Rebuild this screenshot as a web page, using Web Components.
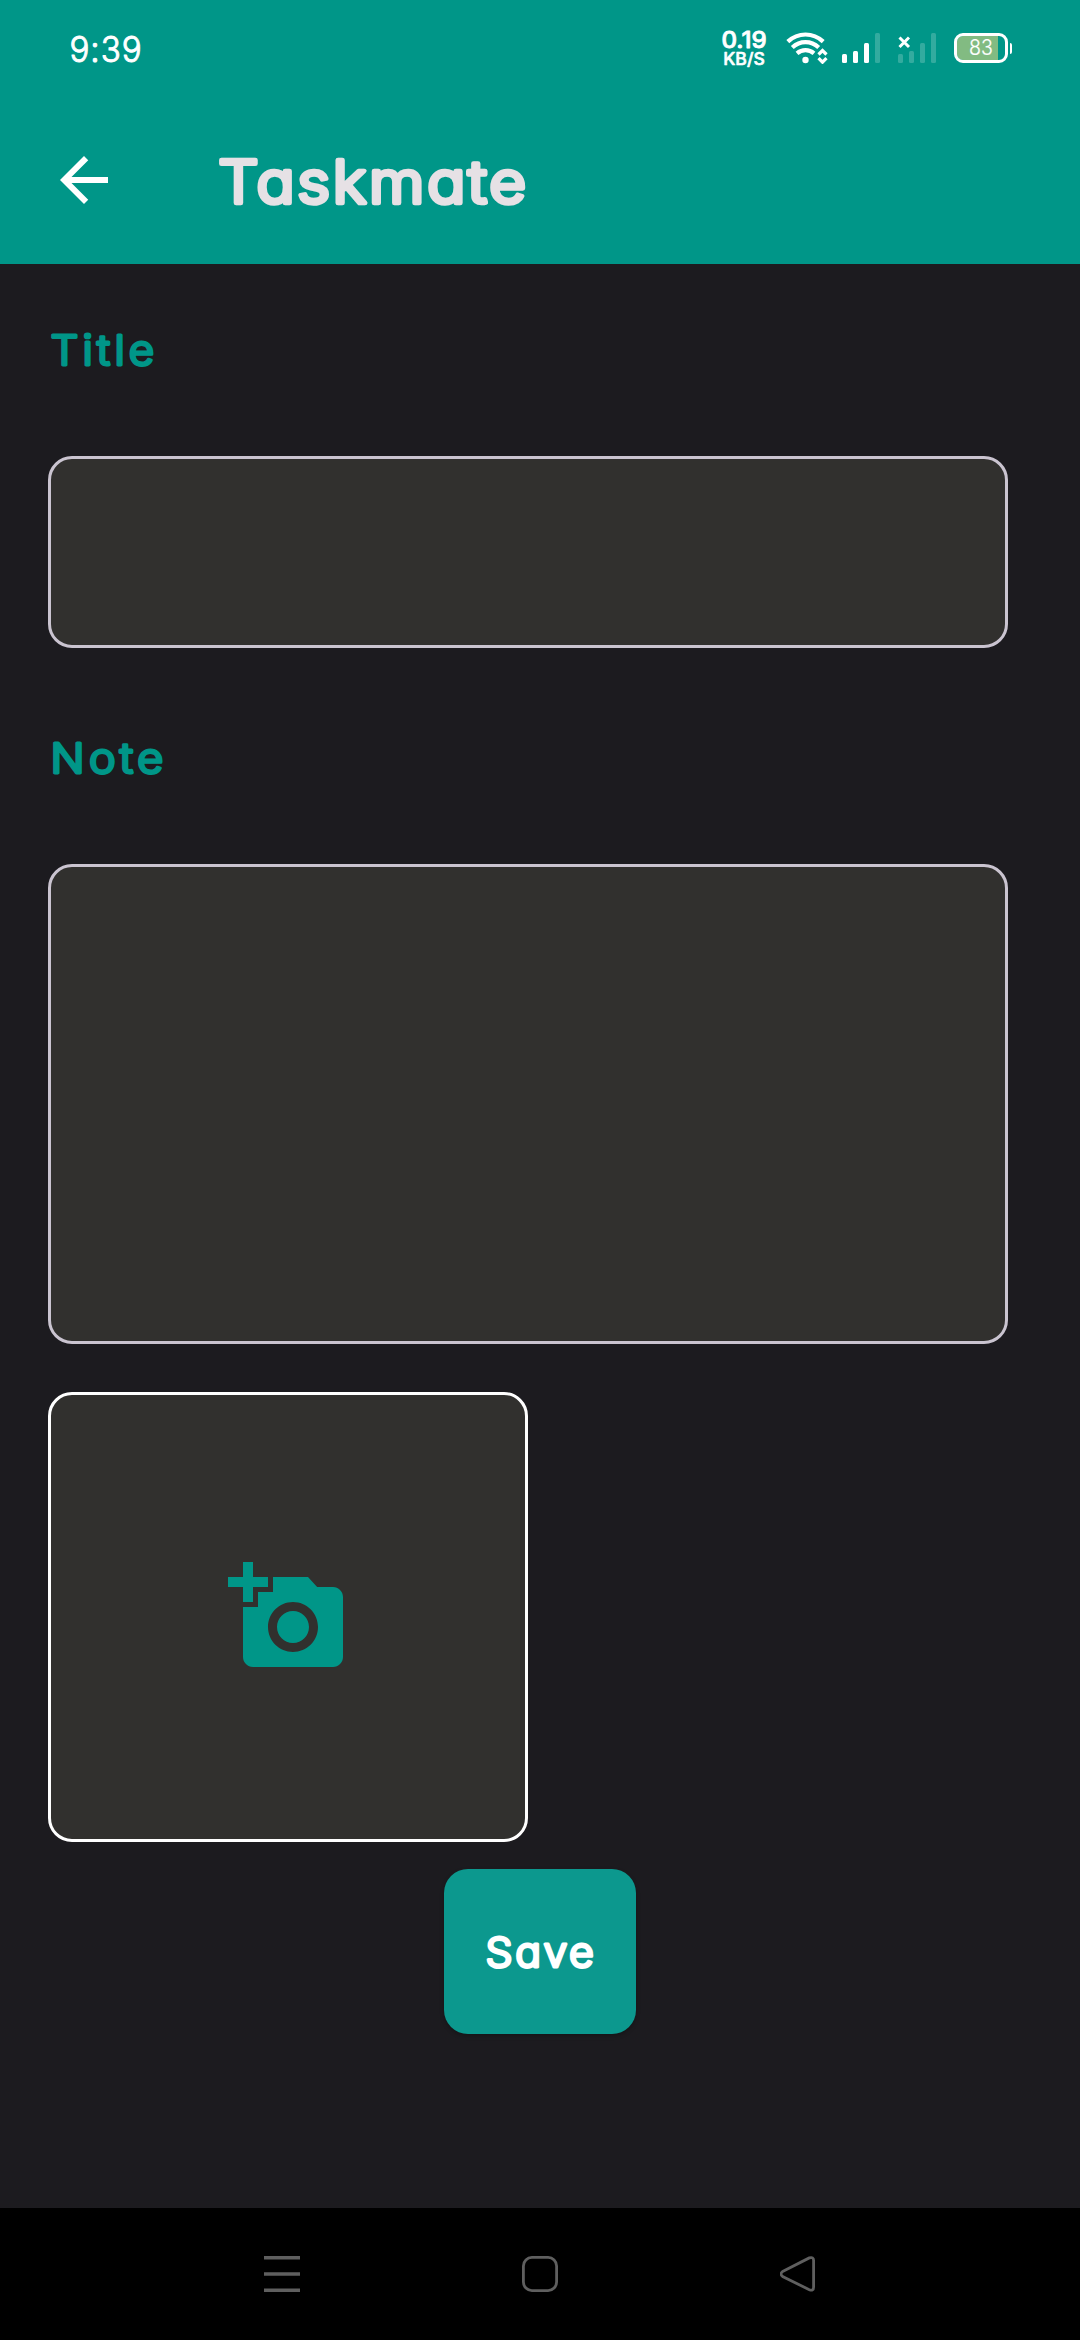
<!DOCTYPE html>
<html lang="en">
<head>
<meta charset="utf-8">
<title>Taskmate</title>
<style>
html,body{margin:0;padding:0;background:#1c1b1f}
body{width:1080px;height:2340px;overflow:hidden;font-family:Inter,"Open Sans",sans-serif}
</style>
</head>
<body>
<task-screen></task-screen>
<script>
const define = (name, html) => customElements.define(name, class extends HTMLElement {
  constructor() {
    super();
    this.attachShadow({ mode: "open" }).innerHTML = html;
  }
});

/* Text with rounded stroke ends: width = ink width, height = cap height. */
customElements.define("soft-text", class extends HTMLElement {
  connectedCallback() {
    const a = n => this.getAttribute(n);
    const w = +a("w"), h = +a("h"), s = +a("stroke");
    const size = (h - s) / 0.727;
    const dx = +(a("dx") || 0);
    const root = this.attachShadow({ mode: "open" });
    root.innerHTML = `<style>
      :host{display:block;flex:none;width:${w}px;height:${h}px}
      svg{display:block;overflow:visible}
      text{font-family:Inter,"Open Sans",sans-serif;font-feature-settings:"cv11" 1;fill:currentColor;stroke:currentColor;stroke-linejoin:round;stroke-linecap:round;letter-spacing:${a("gap") || 0}px}
      </style><svg width="${w}" height="${h}"><text></text></svg>`;
    const t = root.querySelector("text");
    t.setAttribute("x", s / 2 + dx);
    t.setAttribute("y", h - s / 2);
    t.setAttribute("font-size", size);
    t.setAttribute("font-weight", a("weight") || 400);
    t.setAttribute("stroke-width", s);
    t.setAttribute("lengthAdjust", "spacingAndGlyphs");
    t.setAttribute("textLength", w - s - dx + +(a("extra") || 0));
    t.textContent = a("text");
  }
});

define("wifi-icon", `<style>:host{display:block;width:42px;height:32px}svg{display:block}</style>
<svg width="42" height="32" fill="none" stroke="#fff" stroke-width="4.2">
<path d="M1.8 9.6C12 .1 27 .1 37.2 9.6M6.3 15.5C14 8.400 25 8.400 32.700 15.500M11 21.300C16 17 23 17 28 21.300"/>
<circle cx="19.500" cy="28" r="3.200" fill="#fff" stroke="none"/>
<path d="M32.500 22.500l4-4 4 4M32.500 26.200l4 4 4-4" stroke-width="3.200"/></svg>`);

customElements.define("signal-bars", class extends HTMLElement {
  connectedCallback() {
    const lit = +this.getAttribute("lit");
    const bars = [9, 12, 20, 30].map((h, i) => `<i style="height:${h}px;opacity:${i < lit ? 1 : .2}"></i>`).join("");
    this.attachShadow({ mode: "open" }).innerHTML = `<style>
      :host{display:flex;position:relative;align-items:flex-end;gap:6px;height:30px}
      i{width:5px;background:#fff;border-radius:1.5px}
      svg{position:absolute;left:0;top:3px}</style>${bars}` +
      (lit ? "" : `<svg width="13" height="13" stroke="#fff" stroke-width="3"><path d="M1.500 1.500l9.500 9.500M11 1.500L1.500 11"/></svg>`);
  }
});

define("battery-level", `<style>
:host{display:flex;align-items:center;gap:2px}
.body{box-sizing:border-box;width:54px;height:30px;border:3px solid #fff;border-radius:9px;display:flex;align-items:center;padding-left:13px;color:#fff;background:linear-gradient(90deg,#82bb82 41px,#009688 41px) padding-box}
.tip{width:2.500px;height:11px;background:#fff;border-radius:0 2px 2px 0}
</style><div class="body"><soft-text text="83" w="22" h="15.500" stroke=".2" weight="300" dx="-1" extra="1"></soft-text></div><div class="tip"></div>`);

define("status-bar", `<style>
:host{display:flex;height:96px;padding:0 68px 0 71px;justify-content:space-between;align-items:center;box-sizing:border-box;color:#fff}
.right{display:flex;align-items:center}
.speed{display:flex;flex-direction:column;align-items:center;gap:4px;width:44px}
wifi-icon{margin-left:20px}signal-bars{margin-left:14px}signal-bars+signal-bars{margin-left:18px}battery-level{margin-left:18px}
</style><soft-text text="9:39" w="69" h="27" stroke="1" weight="300" dx="-2" extra="3" gap="1"></soft-text>
<div class="right"><div class="speed"><soft-text text="0.19" w="44" h="17" stroke=".8" weight="500" dx="-1" extra="1"></soft-text><soft-text text="KB/S" w="40" h="13" stroke=".6" weight="500" dx="-1" extra="1"></soft-text></div>
<wifi-icon></wifi-icon><signal-bars lit="3"></signal-bars><signal-bars lit="0"></signal-bars><battery-level></battery-level></div>`);

define("app-bar", `<style>
:host{display:flex;height:168px;align-items:center;padding-left:48px;box-sizing:border-box;color:#e6e1e5}
svg{display:block;flex:none;margin-right:98px}
soft-text{margin-top:2px}
</style><svg width="72" height="72" viewBox="0 0 24 24" fill="#fff"><path d="M20 11H7.830l5.590-5.590L12 4l-8 8 8 8 1.410-1.410L7.830 13H20v-2z"/></svg>
<soft-text text="Taskmate" w="308" h="47" stroke="4.600" weight="300" dx="-2" extra="5" gap="2.500"></soft-text>`);

define("note-field", `<style>
:host{display:block;box-sizing:border-box;width:960px;border:3px solid #cac4d0;border-radius:24px;background:#31302e}
</style>`);

define("photo-picker", `<style>
:host{display:flex;align-items:center;justify-content:center;box-sizing:border-box;width:480px;height:450px;border:3px solid #fff;border-radius:24px;background:#31302e}
</style><svg width="120" height="120" viewBox="0 0 24 24" fill="#009688"><path d="M3 4V1h2v3h3v2H5v3H3V6H0V4h3zm3 6V7h3V4h7l1.830 2H21c1.100 0 2 .9 2 2v12c0 1.100-.9 2-2 2H5c-1.100 0-2-.9-2-2V10h3zm7 9c2.760 0 5-2.240 5-5s-2.240-5-5-5-5 2.240-5 5 2.240 5 5 5zm-3.200-5c0 1.770 1.430 3.200 3.200 3.200s3.200-1.430 3.200-3.200-1.430-3.200-3.200-3.200-3.200 1.430-3.200 3.200z"/></svg>`);

define("save-button", `<style>
:host{display:flex;align-items:center;justify-content:center;width:192px;height:165px;border-radius:24px;background:#0c988e;color:#fff;box-shadow:0 2px 4px rgba(0,0,0,.25)}
</style><soft-text text="Save" w="110" h="33" stroke="3" weight="300" dx="-1" extra="3" gap="2.500"></soft-text>`);

define("nav-bar", `<style>
:host{display:flex;height:132px;align-items:center;justify-content:space-between;padding:0 264px;box-sizing:border-box;background:#000}
svg{display:block}
</style>
<svg width="36" height="36" stroke="#5f5f5f" stroke-width="3.400"><path d="M0 1.700h36M0 18h36M0 34.300h36"/></svg>
<svg width="36" height="36" fill="none" stroke="#5f5f5f" stroke-width="2.800"><rect x="1.400" y="1.400" width="33.200" height="33.200" rx="8.500"/></svg>
<svg width="36" height="36" fill="none" stroke="#5f5f5f" stroke-width="2.800"><path d="M2.600 15.500L29.300 1.900Q33.600 .5 33.600 4.500V31Q33.600 35.500 29.300 33.700L2.600 20.500Q-.5 18 2.600 15.500Z"/></svg>`);

define("task-screen", `<style>
:host{display:flex;flex-direction:column;width:1080px;height:2340px;background:#1c1b1f}
header{background:#009688}
main{flex:1;display:flex;flex-direction:column;align-items:flex-start;padding:69px 48px 0;color:#009688}
.l1{margin-left:2px}.l2{margin:93px 0 0 4px}
.f1{height:192px;margin-top:90px}.f2{height:480px;margin-top:90px}
photo-picker{margin-top:48px}save-button{margin-top:27px;align-self:center}
main{box-sizing:border-box}
</style><header><status-bar></status-bar><app-bar></app-bar></header>
<main><soft-text class="l1" text="Title" w="105" h="33" stroke="3" weight="300" dx="-1" extra="5" gap="4"></soft-text>
<note-field class="f1"></note-field>
<soft-text class="l2" text="Note" w="112" h="33" stroke="3" weight="300" dx="-3" extra="5" gap="4"></soft-text>
<note-field class="f2"></note-field>
<photo-picker></photo-picker><save-button></save-button></main><nav-bar></nav-bar>`);
</script>
</body>
</html>
